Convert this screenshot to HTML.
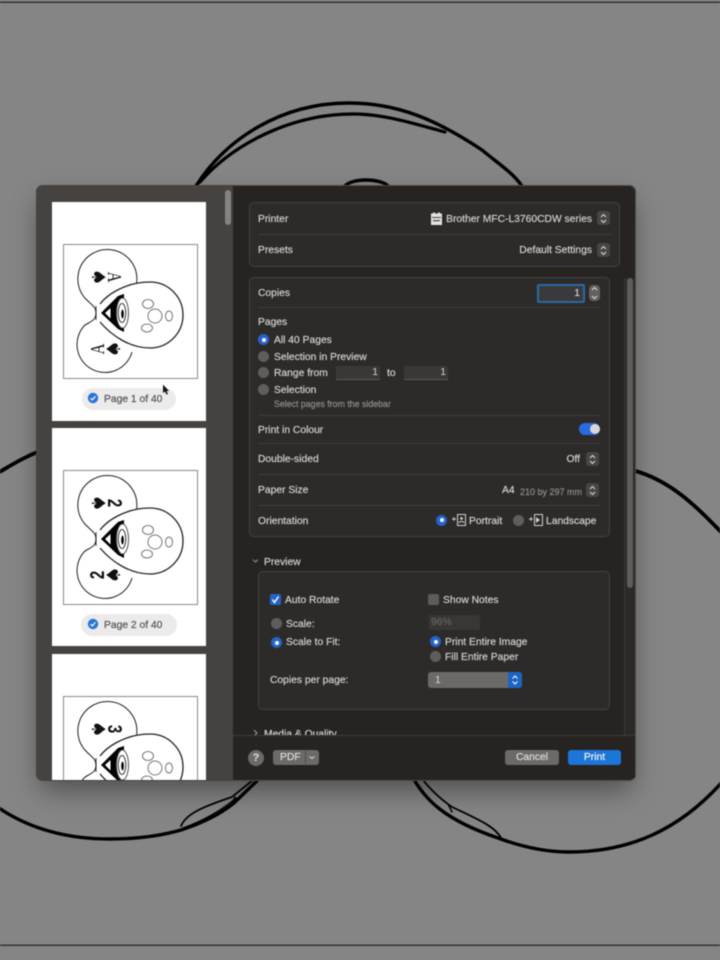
<!DOCTYPE html>
<html><head><meta charset="utf-8">
<style>
html,body{margin:0;padding:0;background:#848484}
#r{position:relative;width:720px;height:960px;overflow:hidden;background:#858585;font-family:"Liberation Sans",sans-serif;filter:blur(.45px)}
.a{position:absolute}
.t{position:absolute;margin-top:1.5px;font-size:10.3px;line-height:12px;color:#d2d0ce;white-space:nowrap;-webkit-text-stroke:.2px currentColor}
.tr{text-align:right}
.p{position:absolute;background:#2d2b29;border:1px solid #444240;border-radius:5px;box-sizing:border-box}
.d{position:absolute;height:1px;background:#403e3c}
.rd{position:absolute;width:11px;height:11px;border-radius:50%;background:#605e5c}
.rb{position:absolute;width:11px;height:11px;border-radius:50%;background:#2463c8}
.rb:after{content:"";position:absolute;left:3.5px;top:3.5px;width:4px;height:4px;border-radius:50%;background:#fff}
.st{position:absolute;width:13px;height:14px;border-radius:3px;background:#484644}
.pg{position:absolute;left:52px;width:154px;background:#fff}
.in{position:absolute;height:14px;background:#3a3836;border-bottom:1px solid #5c5a58;box-sizing:border-box;color:#d2d0ce;font-size:10.300px;line-height:14px;text-align:right;padding-right:2px}
.btn{position:absolute;height:15px;border-radius:3px;background:#6c6a67;color:#dcdad8;font-size:10.300px;line-height:16px;text-align:center;-webkit-text-stroke:.2px currentColor}
</style></head><body>
<div id="r">
<svg class="a" style="left:0;top:0" width="720" height="960" fill="none" stroke="#000" stroke-linecap="round">
<defs><filter id="sh" x="-20%" y="-20%" width="140%" height="140%"><feGaussianBlur stdDeviation="14"/></filter></defs>
<rect x="0" y="1.500" width="720" height="1.500" fill="#333" stroke="none"/>
<rect x="0" y="944.500" width="720" height="1.500" fill="#333" stroke="none"/>
<path d="M196 186C225 140 280 103 349 103C400 103 440 122 482 150C500 165 512 172 522 186" stroke-width="3.400"/>
<path d="M200 182C232 145 290 114 353 114C385 114 415 124 445 132" stroke-width="3.200"/>
<path d="M345 186C352 178 380 178 388 186" stroke-width="3.400"/>
<path d="M-4 474C10 466 22 458 40 451" stroke-width="3.800"/>
<path d="M632 470C670 480 695 505 724 535" stroke-width="3.800"/>
<path d="M-4 806C30 830 70 839 110 839C135 839 160 836 181 830C205 822 220 814 234 803L262 776" stroke-width="3.400"/>
<path d="M181 826C186 814 202 807 232 797L258 776" stroke-width="1.800"/>
<path d="M183 828C205 820 222 810 236 798" stroke-width="1.400"/>
<path d="M232 804L235 797" stroke-width="1.400"/>
<path d="M412 776C425 800 445 820 498 838C525 848 550 852 569 852C630 852 680 830 724 780" stroke-width="3.400"/>
<path d="M420 776C430 790 442 800 452 807C475 818 495 826 501 838" stroke-width="1.800"/>
<path d="M448 804L452 812" stroke-width="1.400"/>
<rect x="40" y="200" width="592" height="590" rx="8" fill="#000" fill-opacity=".42" stroke="none" filter="url(#sh)"/>
</svg>

<div class="a" style="left:36px;top:185px;width:600px;height:596px;border-radius:7px;background:#262320;overflow:hidden;box-shadow:inset 0 0 0 1px #4f4d4b">
<div class="a" style="left:0;top:0;width:197px;height:596px;background:#454240"></div>
<div class="a" style="left:189px;top:5px;width:6px;height:35px;border-radius:3px;background:#858381"></div>
<div class="a" style="left:588px;top:93px;width:10px;height:500px;background:#2b2926;border-left:1px solid #3c3a38"></div>
<div class="a" style="left:591px;top:93px;width:6px;height:310px;border-radius:3px;background:#5f5d5b"></div>
</div>

<div class="pg" style="top:202px;height:219px"></div>
<div class="pg" style="top:428px;height:218px"></div>
<div class="pg" style="top:654px;height:126px"></div>

<svg class="a" style="left:0;top:0" width="720" height="780" fill="none">
<defs>
<g id="card" stroke="#222" stroke-width="1">
<path d="M127 301A29.500 29.500 0 1 0 84 297C90 304 96 306 96 313C96 322 88 322 84 326A28 28 0 1 0 132 352"/>
<path d="M96 306V320" stroke="#000" stroke-width=".8"/>
<path d="M100 304C106 296 124 282 150 282A33 33 0 0 1 183 315A33 33 0 0 1 150 348C130 348 112 336 100 322" fill="#fff" stroke-width="1.300"/>
<path d="M101 313L118 296L124 294V332L118 329Z" fill="#000" stroke="none"/>
<path d="M105 313L110.500 308V318.500Z" fill="#fff" stroke="none"/>
<ellipse cx="122.500" cy="313" rx="6" ry="15" fill="#fff" stroke="#555"/>
<ellipse cx="122" cy="313" rx="3.800" ry="9.500" fill="#fff" stroke="#333"/>
<ellipse cx="122.500" cy="314" rx="1.300" ry="4.500" fill="#000" stroke="none"/>
<g stroke="#777"><circle cx="155" cy="316" r="7"/><ellipse cx="148" cy="304" rx="5.500" ry="4.500"/><ellipse cx="169" cy="316" rx="3.500" ry="5"/><ellipse cx="147" cy="328" rx="5.500" ry="4"/></g>
</g>
</defs>
<g>
<rect x="63.500" y="244.500" width="134" height="134" stroke="#8a8a8a"/>
<use href="#card"/>
<text transform="translate(99,277) rotate(90)" font-size="19" fill="#111" font-family="DejaVu Sans" text-anchor="middle" y="7">♠</text>
<text transform="translate(115,277) rotate(90) scale(1,1.350)" font-size="15" fill="#111" font-family="Liberation Serif" text-anchor="middle" y="5">A</text>
<text transform="translate(113,349) rotate(-90)" font-size="19" fill="#111" font-family="DejaVu Sans" text-anchor="middle" y="7">♠</text>
<text transform="translate(97,349) rotate(-90) scale(1,1.350)" font-size="15" fill="#111" font-family="Liberation Serif" text-anchor="middle" y="5">A</text>
</g>
<g transform="translate(0,226)">
<rect x="63.500" y="244.500" width="134" height="134" stroke="#8a8a8a"/>
<use href="#card"/>
<text transform="translate(99,277) rotate(90)" font-size="19" fill="#111" font-family="DejaVu Sans" text-anchor="middle" y="7">♠</text>
<text transform="translate(115,277) rotate(90) scale(1,1.350)" font-size="15" fill="#111" font-family="Liberation Sans" font-weight="bold" text-anchor="middle" y="5">2</text>
<text transform="translate(113,349) rotate(-90)" font-size="19" fill="#111" font-family="DejaVu Sans" text-anchor="middle" y="7">♠</text>
<text transform="translate(97,349) rotate(-90) scale(1,1.350)" font-size="15" fill="#111" font-family="Liberation Sans" font-weight="bold" text-anchor="middle" y="5">2</text>
</g>
<g transform="translate(0,452)">
<rect x="63.500" y="244.500" width="134" height="134" stroke="#8a8a8a"/>
<use href="#card"/>
<text transform="translate(99,277) rotate(90)" font-size="19" fill="#111" font-family="DejaVu Sans" text-anchor="middle" y="7">♠</text>
<text transform="translate(115,277) rotate(90) scale(1,1.350)" font-size="15" fill="#111" font-family="Liberation Sans" font-weight="bold" text-anchor="middle" y="5">3</text>
</g>
<rect x="36" y="780" width="600" height="1" fill="#4f4d4b"/>
</svg>

<div class="a" style="left:82px;top:388px;width:94px;height:22px;border-radius:11px;background:#eceaea"></div>
<div class="a" style="left:81px;top:614px;width:96px;height:22px;border-radius:11px;background:#eceaea"></div>
<svg class="a" style="left:87px;top:392px" width="12" height="12"><circle cx="6" cy="6" r="5.200" fill="#2a75d8"/><path d="M3.600 6.200L5.300 7.900L8.400 4.400" stroke="#fff" stroke-width="1.200" fill="none"/></svg>
<svg class="a" style="left:87px;top:618px" width="12" height="12"><circle cx="6" cy="6" r="5.200" fill="#2a75d8"/><path d="M3.600 6.200L5.300 7.900L8.400 4.400" stroke="#fff" stroke-width="1.200" fill="none"/></svg>
<div class="t" style="left:104px;top:392px;color:#555">Page 1 of 40</div>
<div class="t" style="left:104px;top:618.500px;color:#555">Page 2 of 40</div>
<svg class="a" style="left:162px;top:384px" width="8" height="12"><path d="M1 0.500V9L3 7.500L4.500 10.500L6 10L4.500 7H7Z" fill="#111"/></svg>

<!-- Printer panel -->
<div class="p" style="left:249px;top:202px;width:371px;height:65px"></div>
<div class="d" style="left:258px;top:234px;width:353px"></div>
<div class="t" style="left:258px;top:212px">Printer</div>
<div class="t" style="left:258px;top:243px">Presets</div>
<svg class="a" style="left:430px;top:212px" width="13" height="14"><path d="M1 1.500H3V.5H5V1.500H8V.5H10V1.500H12V13H1Z" fill="#e4e2e0"/><rect x="2" y="5" width="9" height="1" fill="#444"/><rect x="3" y="8" width="7" height="1.200" fill="#444"/></svg>
<div class="t tr" style="right:128px;top:212px">Brother MFC-L3760CDW series</div>
<div class="t tr" style="right:128px;top:243px">Default Settings</div>

<!-- Main panel -->
<div class="p" style="left:249px;top:277px;width:361px;height:260px"></div>
<div class="d" style="left:258px;top:307px;width:342px"></div>
<div class="d" style="left:258px;top:415px;width:342px"></div>
<div class="d" style="left:258px;top:443px;width:342px"></div>
<div class="d" style="left:258px;top:474px;width:342px"></div>
<div class="d" style="left:258px;top:505px;width:342px"></div>
<div class="t" style="left:258px;top:286px">Copies</div>
<div class="a" style="left:537px;top:284px;width:48px;height:19px;box-sizing:border-box;border:2px solid #2a6aa6;border-radius:2px;background:#3a3a3a;color:#eee;font-size:10.300px;line-height:16px;text-align:right;padding-right:3px">1</div>
<div class="a" style="left:589px;top:285px;width:11px;height:16px;border-radius:4px;background:#636160"></div>
<div class="t" style="left:258px;top:315px">Pages</div>
<div class="rb" style="left:258px;top:334px"></div>
<div class="t" style="left:274px;top:333px">All 40 Pages</div>
<div class="rd" style="left:258px;top:351px"></div>
<div class="t" style="left:274px;top:350px">Selection in Preview</div>
<div class="rd" style="left:258px;top:367px"></div>
<div class="t" style="left:274px;top:366px">Range from</div>
<div class="in" style="left:336px;top:366px;width:44px">1</div>
<div class="t" style="left:387px;top:366px">to</div>
<div class="in" style="left:404px;top:366px;width:44px">1</div>
<div class="rd" style="left:258px;top:384px"></div>
<div class="t" style="left:274px;top:383px">Selection</div>
<div class="t" style="left:274px;top:396px;font-size:8.800px;color:#8f8d8b">Select pages from the sidebar</div>
<div class="t" style="left:258px;top:423px">Print in Colour</div>
<div class="a" style="left:579px;top:423px;width:21px;height:12px;border-radius:6px;background:#2b6be0"></div>
<div class="a" style="left:590px;top:424px;width:10px;height:10px;border-radius:50%;background:#d8d8d8"></div>
<div class="t" style="left:258px;top:452px">Double-sided</div>
<div class="t tr" style="right:140px;top:452px">Off</div>
<div class="t" style="left:258px;top:483px">Paper Size</div>
<div class="t" style="left:502px;top:483px">A4</div>
<div class="t" style="left:520px;top:484px;font-size:9px;color:#8f8d8b">210 by 297 mm</div>
<div class="t" style="left:258px;top:514px">Orientation</div>
<div class="rb" style="left:436px;top:514.500px"></div>
<svg class="a" style="left:452px;top:513px" width="15" height="14" fill="none" stroke="#d2d0ce"><rect x="5.500" y="1.500" width="8" height="11"/><circle cx="9.500" cy="5.500" r="1.400" fill="#d2d0ce" stroke="none"/><path d="M7 10C7 8 12 8 12 10" /><path d="M0 6H4M2 4V8" stroke-width=".9"/></svg>
<div class="t" style="left:469px;top:514px">Portrait</div>
<div class="rd" style="left:513px;top:514.500px"></div>
<svg class="a" style="left:529px;top:513px" width="15" height="14" fill="none" stroke="#d2d0ce"><rect x="5.500" y="1.500" width="8" height="11"/><path d="M7 4V10L11 7Z" fill="#d2d0ce" stroke="none"/><path d="M0 6H4M2 4V8" stroke-width=".9"/></svg>
<div class="t" style="left:546px;top:514px">Landscape</div>

<!-- Steppers -->
<div class="st" style="left:597px;top:211px"></div>
<div class="st" style="left:597px;top:243px"></div>
<div class="st" style="left:586px;top:452px"></div>
<div class="st" style="left:586px;top:483px"></div>
<svg class="a" style="left:0;top:0" width="720" height="780" fill="none" stroke="#dddbd9" stroke-width="1">
<path d="M601 217L603.500 214.500L606 217M601 220L603.500 222.500L606 220"/>
<path d="M601 249L603.500 246.500L606 249M601 252L603.500 254.500L606 252"/>
<path d="M590 458L592.500 455.500L595 458M590 461L592.500 463.500L595 461"/>
<path d="M590 489L592.500 486.500L595 489M590 492L592.500 494.500L595 492"/>
<path d="M592 290L594.500 287.500L597 290M592 296L594.500 298.500L597 296"/>
<path d="M253 559.500L255.500 562L258 559.500" stroke="#8f8d8b"/>
</svg>

<!-- Preview -->
<div class="t" style="left:264px;top:555px">Preview</div>
<div class="p" style="left:258px;top:571px;width:352px;height:139px"></div>
<div class="a" style="left:270px;top:594px;width:11px;height:11px;border-radius:2px;background:#2463c8"></div>
<svg class="a" style="left:270px;top:594px" width="11" height="11"><path d="M2.500 5.500L4.500 8.500L8.500 2.500" stroke="#fff" stroke-width="1.400" fill="none"/></svg>
<div class="t" style="left:285px;top:593px">Auto Rotate</div>
<div class="a" style="left:428px;top:594px;width:11px;height:11px;border-radius:2px;background:#5e5c5a"></div>
<div class="t" style="left:443px;top:593px">Show Notes</div>
<div class="rd" style="left:271px;top:618px"></div>
<div class="t" style="left:286px;top:617px">Scale:</div>
<div class="a" style="left:429px;top:615px;width:51px;height:15px;background:#393735;color:#6f6d6b;font-size:10.300px;line-height:16px;padding-left:2px;box-sizing:border-box">96%</div>
<div class="rb" style="left:271px;top:637px"></div>
<div class="t" style="left:286px;top:635px">Scale to Fit:</div>
<div class="rb" style="left:430px;top:636px"></div>
<div class="t" style="left:445px;top:635px">Print Entire Image</div>
<div class="rd" style="left:430px;top:651px"></div>
<div class="t" style="left:445px;top:650px">Fill Entire Paper</div>
<div class="t" style="left:270px;top:673.500px">Copies per page:</div>
<div class="a" style="left:428px;top:672px;width:94px;height:16px;border-radius:3px;background:#6c6a67;color:#dcdad8;font-size:10.300px;line-height:17px;padding-left:7px;box-sizing:border-box">1</div>
<div class="a" style="left:508px;top:672px;width:14px;height:16px;border-radius:0 3px 3px 0;background:#1c64c4"></div>
<svg class="a" style="left:508px;top:672px" width="14" height="16" fill="none" stroke="#fff"><path d="M4.500 6.500L7 4L9.500 6.500M4.500 9.500L7 12L9.500 9.500"/></svg>
<div class="t" style="left:264px;top:727px">Media &amp; Quality</div>
<svg class="a" style="left:253px;top:729px" width="6" height="8" fill="none" stroke="#a09e9c"><path d="M1 1L4 4L1 7"/></svg>

<!-- Footer -->
<div class="a" style="left:233px;top:735px;width:402px;height:45px;background:#262320;border-radius:0 0 6px 0"></div>
<div class="a" style="left:233px;top:735px;width:402px;height:1px;background:#3e3c3a"></div>
<div class="a" style="left:248px;top:750px;width:16px;height:16px;border-radius:50%;background:#6c6a67;color:#e4e2e0;font-size:11px;font-weight:bold;line-height:16px;text-align:center">?</div>
<div class="btn" style="left:273px;top:750px;width:46px;text-align:left;padding-left:7px;box-sizing:border-box">PDF</div>
<div class="a" style="left:305px;top:751px;width:1px;height:13px;background:#504e4c"></div>
<svg class="a" style="left:308px;top:755px" width="8" height="6" fill="none" stroke="#dcdad8"><path d="M1.500 1.500L4 3.500L6.500 1.500"/></svg>
<div class="btn" style="left:505px;top:750px;width:54px">Cancel</div>
<div class="btn" style="left:568px;top:750px;width:53px;background:#1b76d8;color:#f2f2f2">Print</div>
</div>
</body></html>
